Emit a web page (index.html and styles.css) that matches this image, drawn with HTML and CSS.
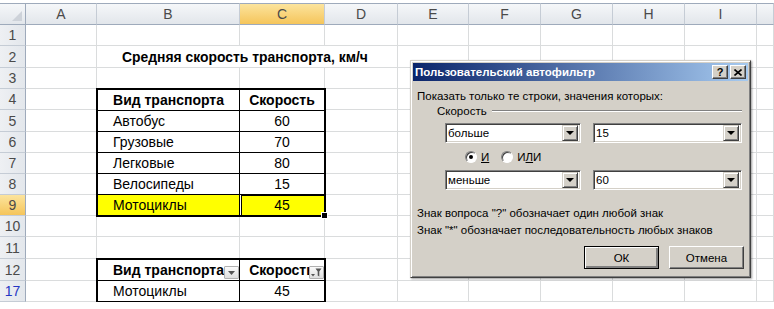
FILE: index.html
```html
<!DOCTYPE html>
<html lang="ru">
<head>
    <meta charset="UTF-8">
    <meta name="viewport" content="width=device-width, initial-scale=1.0">
    <title>Пользовательский автофильтр</title>
    <link rel="stylesheet" href="styles.css">
</head>
<body>

    <div class="sheet" id="sheet">
        <div class="title">Средняя скорость транспорта, км/ч</div>

        <div class="table table-main">
            <div class="tc head">Вид транспорта</div>
            <div class="tc head">Скорость</div>
            <div class="tc name">Автобус</div>
            <div class="tc">60</div>
            <div class="tc name">Грузовые</div>
            <div class="tc">70</div>
            <div class="tc name">Легковые</div>
            <div class="tc">80</div>
            <div class="tc name">Велосипеды</div>
            <div class="tc">15</div>
            <div class="tc name hl last">Мотоциклы</div>
            <div class="tc hl last active">45</div>
            <span class="fill-handle"></span>
        </div>

        <div class="table table-filter">
            <div class="tc head name">Вид транспорта
                <span class="filter-btn">
                    <svg width="7" height="4" viewBox="0 0 7 4"><path d="M0 0h7L3.5 4z" fill="#555"/></svg>
                </span>
            </div>
            <div class="tc head">Скорость
                <span class="filter-btn">
                    <svg width="11" height="9" viewBox="0 0 11 9"><path d="M0 6h4L2 8.5z" fill="#555"/><path d="M4.5 0.5h6L8.3 3.5v5l-1.6-1V3.5z" fill="#555"/></svg>
                </span>
            </div>
            <div class="tc name last">Мотоциклы</div>
            <div class="tc last">45</div>
        </div>
    </div>

    <div class="dialog">
        <div class="caption">
            <span class="caption-text">Пользовательский автофильтр</span>
            <span class="cap-btn">?</span>
            <span class="cap-btn">
                <svg width="8" height="7" viewBox="0 0 8 7"><path d="M0.5 0.5l7 6M7.5 0.5l-7 6" stroke="#000" stroke-width="1.6"/></svg>
            </span>
        </div>

        <div class="dialog-body">
            <p class="prompt">Показать только те строки, значения которых:</p>

            <div class="group">
                <span>Скорость</span>
                <i class="etched"></i>
            </div>

            <div class="cond">
                <div class="combo op"><span>больше</span><b class="drop"></b></div>
                <div class="combo val"><span>15</span><b class="drop"></b></div>
            </div>

            <div class="radios">
                <label class="radio"><span class="dot checked"></span><u>И</u></label>
                <label class="radio"><span class="dot"></span><span>И<u>Л</u>И</span></label>
            </div>

            <div class="cond">
                <div class="combo op"><span>меньше</span><b class="drop"></b></div>
                <div class="combo val"><span>60</span><b class="drop"></b></div>
            </div>

            <p class="hint">Знак вопроса "?" обозначает один любой знак</p>
            <p class="hint">Знак "*" обозначает последовательность любых знаков</p>

            <div class="actions">
                <button class="btn default">ОК</button>
                <button class="btn">Отмена</button>
            </div>
        </div>
    </div>

    <script>
        const sheet = document.getElementById('sheet');
        const columns = ['A', 'B', 'C', 'D', 'E', 'F', 'G', 'H', 'I', ''];
        const rows = [1, 2, 3, 4, 5, 6, 7, 8, 9, 10, 11, 12, 17];
        const activeCol = 'C';
        const activeRow = 9;
        const filteredRows = [17];

        // cells covered by the title and the two tables
        function isTaken(row, col) {
            if (row === 2) return col === 'B' || col === 'C' || col === 'D';
            if ((row >= 4 && row <= 9) || row >= 12) return col === 'B' || col === 'C';
            return false;
        }

        function addCell(className, text) {
            const cell = document.createElement('div');
            cell.className = className;
            if (text !== undefined) cell.textContent = text;
            sheet.appendChild(cell);
        }

        addCell('corner');
        columns.forEach(col => addCell('col-head' + (col === activeCol ? ' active' : ''), col));

        rows.forEach(row => {
            let cls = 'row-head';
            if (row === activeRow) cls += ' active';
            if (filteredRows.includes(row)) cls += ' filtered';
            addCell(cls, row);
            columns.forEach(col => {
                if (!isTaken(row, col)) addCell('cell');
            });
        });
    </script>

</body>
</html>
```

FILE: styles.css
```css
* {
    box-sizing: border-box;
}

body {
    margin: 0;
    padding-top: 3px;
    background: #fff;
    font-family: 'Liberation Sans', Arial, sans-serif;
    overflow: hidden;
}

/* Spreadsheet */
.sheet {
    display: grid;
    grid-template-columns: 26px 71px 143px 85px 73px 71px 72px 72px 72px 72px 17px;
    grid-template-rows: 22px 21px 22px 21px 21px 22px 21px 21px 21px 21px 21px 22px 22px 21px;
    font-size: 14px;
    color: #000;
}

.corner, .col-head {
    background: linear-gradient(#f5f7f9, #e2e6eb);
    border-top: 1px solid #9eaabb;
    border-bottom: 1px solid #9eaabb;
    border-right: 1px solid #c5ccd5;
}

.corner {
    position: relative;
    border-right-color: #9eaabb;
}

.corner::after {
    content: '';
    position: absolute;
    right: 3px;
    bottom: 3px;
    border-left: 10px solid transparent;
    border-bottom: 10px solid #cdd2d9;
}

.col-head, .row-head {
    display: flex;
    align-items: center;
    justify-content: center;
    color: #4a4a4a;
    font-size: 14px;
}

.row-head {
    background: linear-gradient(to right, #eef0f3, #e3e7ec);
    border-right: 1px solid #9eaabb;
    border-bottom: 1px solid #c5ccd5;
}

.col-head.active, .row-head.active {
    background: linear-gradient(#fce49d, #f5c55b);
}

.row-head.filtered {
    color: #2536c4;
}

.cell {
    border-right: 1px solid #dadcdd;
    border-bottom: 1px solid #dadcdd;
}

.title {
    grid-column: 3 / 6;
    grid-row: 3;
    display: flex;
    align-items: center;
    padding-left: 25px;
    font-size: 13.9px;
    font-weight: bold;
    white-space: nowrap;
    border-right: 1px solid #dadcdd;
    border-bottom: 1px solid #dadcdd;
}

/* Tables with borders */
.table {
    position: relative;
    display: grid;
    grid-template-columns: 142px 1fr;
    margin: -1px;
    border: 2px solid #000;
    background: #fff;
}

.table-main {
    grid-column: 3 / 5;
    grid-row: 5 / 11;
    grid-template-rows: repeat(5, 21px) 1fr;
}

.table-filter {
    grid-column: 3 / 5;
    grid-row: 13 / 15;
    grid-template-rows: 21px 1fr;
}

.tc {
    position: relative;
    display: flex;
    align-items: center;
    justify-content: center;
    white-space: nowrap;
    border-right: 1px solid #000;
    border-bottom: 1px solid #000;
}

.tc:nth-child(2n) {
    border-right: none;
}

.tc.last {
    border-bottom: none;
}

.tc.name {
    justify-content: flex-start;
    padding-left: 15px;
}

.tc.head {
    font-weight: bold;
}

.tc.hl {
    background: #ffff00;
}

.tc.active {
    box-shadow: inset 1px 0 0 #fff, inset 2px 1px 0 #000;
}

.fill-handle {
    position: absolute;
    right: -4px;
    bottom: -4px;
    width: 7px;
    height: 7px;
    background: #000;
    border: 1px solid #fff;
}

.filter-btn {
    position: absolute;
    right: 0;
    bottom: 1px;
    width: 15px;
    height: 13px;
    display: flex;
    align-items: center;
    justify-content: center;
    background: linear-gradient(#fbfbfb, #dedede);
    border: 1px solid #b0b0b0;
    border-radius: 1px;
}

/* Dialog */
.dialog {
    position: absolute;
    left: 410px;
    top: 60px;
    width: 341px;
    height: 218px;
    padding: 2px;
    background: #d4d0c8;
    border: 1px solid;
    border-color: #d4d0c8 #404040 #404040 #d4d0c8;
    box-shadow: inset 1px 1px #fff, inset -1px -1px #808080, 1px 1px 2px rgba(0, 0, 0, 0.4);
    font-size: 11.5px;
    color: #000;
}

.caption {
    display: flex;
    align-items: center;
    height: 18px;
    padding: 0 2px;
    background: linear-gradient(to right, #0a246a, #a6caf0);
    color: #fff;
    font-weight: bold;
}

.caption-text {
    flex: 1;
}

.cap-btn {
    width: 16px;
    height: 14px;
    display: flex;
    align-items: center;
    justify-content: center;
    background: #d4d0c8;
    border: 1px solid;
    border-color: #fff #404040 #404040 #fff;
    box-shadow: inset -1px -1px #808080;
    color: #000;
    font-size: 11px;
}

.cap-btn + .cap-btn {
    margin-left: 2px;
}

.dialog-body {
    padding: 0 4px;
}

.prompt {
    margin: 9px 0 0;
    line-height: 13px;
}

.group {
    display: flex;
    align-items: center;
    height: 14px;
    margin: 1px 2px 0 20px;
}

.etched {
    flex: 1;
    margin-left: 5px;
    height: 2px;
    border-top: 1px solid #808080;
    border-bottom: 1px solid #fff;
}

.cond {
    display: flex;
    gap: 12px;
    margin: 5px 0 0 28px;
}

.cond + .radios + .cond {
    margin-top: 7px;
}

.combo {
    display: flex;
    align-items: center;
    height: 20px;
    padding: 2px;
    background: #fff;
    border: 1px solid;
    border-color: #808080 #fff #fff #808080;
    box-shadow: inset 1px 1px #404040, inset -1px -1px #d4d0c8;
}

.combo.op {
    width: 136px;
}

.combo.val {
    width: 149px;
}

.combo span {
    flex: 1;
}

.drop {
    width: 16px;
    height: 16px;
    display: flex;
    align-items: center;
    justify-content: center;
    background: #d4d0c8;
    border: 1px solid;
    border-color: #d4d0c8 #404040 #404040 #d4d0c8;
    box-shadow: inset 1px 1px #fff, inset -1px -1px #808080;
}

.drop::after {
    content: '';
    border-top: 4px solid #000;
    border-left: 4px solid transparent;
    border-right: 4px solid transparent;
}

.radios {
    display: flex;
    align-items: center;
    gap: 12px;
    height: 13px;
    margin: 7px 0 0 48px;
}

.radio {
    display: inline-flex;
    align-items: center;
    gap: 4px;
}

.dot {
    position: relative;
    width: 12px;
    height: 12px;
    border-radius: 50%;
    background: #fff;
    border: 1px solid;
    border-color: #808080 #fff #fff #808080;
    box-shadow: inset 1px 1px #404040;
}

.dot.checked::after {
    content: '';
    position: absolute;
    left: 3px;
    top: 3px;
    width: 4px;
    height: 4px;
    border-radius: 50%;
    background: #000;
}

.hint {
    margin: 0;
    line-height: 17px;
}

.radios + .cond + .hint {
    margin-top: 15px;
}

.actions {
    display: flex;
    justify-content: flex-end;
    gap: 10px;
    margin-top: 7px;
}

.btn {
    width: 75px;
    height: 23px;
    padding: 0;
    font: inherit;
    color: #000;
    background: #d4d0c8;
    border: 1px solid;
    border-color: #fff #404040 #404040 #fff;
    box-shadow: inset -1px -1px #808080;
}

.btn.default {
    border-color: #000;
    box-shadow: inset 1px 1px #fff, inset -2px -2px #808080;
}
```
